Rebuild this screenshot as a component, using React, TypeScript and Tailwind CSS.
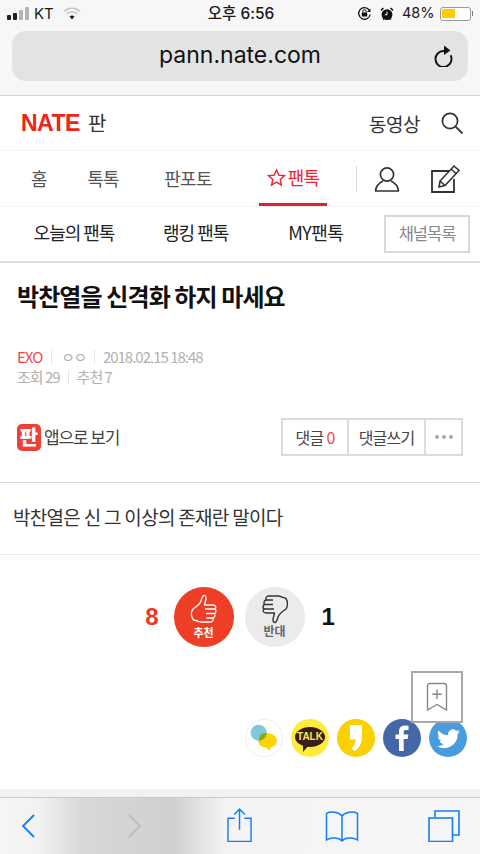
import React from "react";

const kr = "font-['Noto_Sans_CJK_KR','Noto_Sans',sans-serif]";

function StatusBar() {
  return (
    <div className="h-[27px] flex items-center justify-between pl-[7px] pr-[7px] font-['Inter','Noto_Sans_CJK_KR',sans-serif] text-[15px] text-[#1a1a1a]">
      <div className="flex items-center w-[136px]">
        <div className="flex items-end gap-[2px] h-[13px] mr-[5px]">
          <span className="w-[4px] h-[5px] rounded-[1px] bg-[#222]" />
          <span className="w-[4px] h-[7px] rounded-[1px] bg-[#222]" />
          <span className="w-[4px] h-[10px] rounded-[1px] bg-[#b4b4b4]" />
          <span className="w-[4px] h-[13px] rounded-[1px] bg-[#b4b4b4]" />
        </div>
        <span className="leading-none">KT</span>
        <svg width="18" height="13" viewBox="0 0 18 13" className="ml-[9px]">
          <path d="M1 4.5 C5.5 .2 12.5 .2 17 4.5" fill="none" stroke="#c4c4c4" strokeWidth="1.6" />
          <path d="M3.8 7 C7 4.2 11 4.2 14.2 7" fill="none" stroke="#c4c4c4" strokeWidth="1.6" />
          <path d="M6.5 9.4 C8 8.3 10 8.3 11.5 9.4 L9 12.5 Z" fill="#222" />
        </svg>
      </div>
      <span className="leading-none font-medium text-[15.5px] whitespace-nowrap">오후 6:56</span>
      <div className="flex items-center justify-end w-[134px]">
        <svg width="15" height="15" viewBox="0 0 15 15" className="mr-[8px]">
          <path d="M13.2 8.5 A5.8 5.8 0 1 1 12.2 4" fill="none" stroke="#111" strokeWidth="1.3" />
          <path d="M13.5 2.5 V6 H10 Z" fill="#111" />
          <rect x="4.8" y="6.6" width="5.4" height="4" rx=".6" fill="#111" />
          <path d="M5.8 6.6 V5.4 A1.7 1.7 0 0 1 9.2 5.4 V6.6" fill="none" stroke="#111" strokeWidth="1" />
        </svg>
        <svg width="14" height="14" viewBox="0 0 14 14" className="mr-[8px]">
          <circle cx="7" cy="7.6" r="5.4" fill="#111" />
          <path d="M1 3.4 L3.4 1 M13 3.4 L10.6 1 M3 12.6 L4 11.4 M11 12.6 L10 11.4" stroke="#111" strokeWidth="1.5" />
          <path d="M7 4.6 V7.8 H4.8" fill="none" stroke="#fff" strokeWidth="1" />
        </svg>
        <span className="leading-none text-[14.5px] mr-[5px]">48%</span>
        <div className="w-[31px] h-[14px] rounded-[3px] border border-[#9a9a9a] p-[1.5px] bg-white">
          <div className="w-[13px] h-full bg-[#ffcc00] rounded-[1px]" />
        </div>
        <span className="w-[1.5px] h-[5px] bg-[#777] ml-[1px]" />
      </div>
    </div>
  );
}

function UrlBar() {
  return (
    <div className="h-[68px] pt-[4px] px-[12px] bg-[#f7f7f7]">
      <div className="relative h-[50px] rounded-[14px] bg-[#e2e3e5] flex items-center justify-center">
        <span className="font-['Inter',sans-serif] text-[23px] leading-none text-[#111] pb-[1px]">pann.nate.com</span>
        <svg width="22" height="24" viewBox="0 0 22 24" className="absolute right-[13px] top-[12px]">
          <path d="M17.6 10.5 A8 8 0 1 1 11 6.2" fill="none" stroke="#111" strokeWidth="1.9" transform="translate(0 1.8)" />
          <path d="M11 2.6 L17.4 7.6 L11 12 Z" fill="#111" />
        </svg>
      </div>
    </div>
  );
}

function Header() {
  return (
    <div className="h-[56px] border-t border-[#d4d4d4] border-b-[#f3f3f3] border-b flex items-center justify-between pl-[21px] pr-[16px]">
      <div className="flex items-center">
        <span className="font-['Liberation_Sans',sans-serif] font-bold text-[#ee2512] text-[23px] leading-none tracking-[-0.5px]">NATE</span>
        <span className={`${kr} text-[20px] leading-none ml-[8px] text-[#333]`}>판</span>
      </div>
      <div className="flex items-center">
        <span className={`${kr} text-[19px] leading-none text-[#333] tracking-[-0.5px]`}>동영상</span>
        <svg width="24" height="24" viewBox="0 0 24 24" className="ml-[20px]">
          <circle cx="10" cy="10" r="7.6" fill="none" stroke="#333" strokeWidth="1.7" />
          <path d="M15.6 15.6 L22.5 22.5" stroke="#333" strokeWidth="1.8" />
        </svg>
      </div>
    </div>
  );
}

function MainNav() {
  return (
    <div className={`${kr} h-[56px] flex items-stretch border-b border-[#f3f3f3] text-[18px] tracking-[-0.7px] text-[#555]`}>
      <div className="w-[78px] flex items-center justify-center">홈</div>
      <div className="w-[50px] flex items-center justify-center">톡톡</div>
      <div className="w-[120px] flex items-center justify-center">판포토</div>
      <div className="ml-[11px] w-[68px] flex items-center justify-center gap-[2px] text-[#ee2230] border-b-[3px] border-[#e4202c] pt-[1px]">
        <svg width="19" height="19" viewBox="0 0 24 24" fill="none" stroke="#ee2230" strokeWidth="1.8">
          <path d="M12 2.5 L14.9 9 L22 9.7 L16.7 14.5 L18.2 21.5 L12 17.9 L5.8 21.5 L7.3 14.5 L2 9.7 L9.1 9 Z" />
        </svg>
        <span>팬톡</span>
      </div>
      <div className="flex-1 flex items-center pl-[29px]">
        <span className="w-px h-[26px] bg-[#d8d8d8]" />
        <svg width="26" height="26" viewBox="0 0 26 26" className="ml-[17px]">
          <circle cx="13" cy="8.5" r="6.6" fill="none" stroke="#333" strokeWidth="1.7" />
          <path d="M1.5 25 C2 19 6 16.5 9 15 M24.5 25 C24 19 20 16.5 17 15 M1 25 H25" fill="none" stroke="#333" strokeWidth="1.7" />
        </svg>
        <svg width="30" height="30" viewBox="0 0 30 30" className="ml-[30px]">
          <path d="M19 7 H2 V28 H24 V15" fill="none" stroke="#333" strokeWidth="1.8" />
          <path d="M9 23 L10 17 L24 2 L29 6.5 L15 21.5 Z M10 17 L15 21.5 M21 5 L26 9.5" fill="none" stroke="#333" strokeWidth="1.6" />
        </svg>
      </div>
    </div>
  );
}

function SubNav() {
  return (
    <div className={`${kr} h-[56px] flex items-center border-b-2 border-[#dedede] text-[18px] tracking-[-1px] text-[#222]`}>
      <div className="w-[148px] text-center pb-[3px]">오늘의 팬톡</div>
      <div className="ml-[15px] whitespace-nowrap pb-[3px]">랭킹 팬톡</div>
      <div className="ml-[60px] whitespace-nowrap pb-[3px] tracking-[-0.6px]">MY팬톡</div>
      <div className="ml-auto mr-[10px] w-[86px] h-[38px] mt-[-1px] border-2 border-[#d8d8d8] flex items-center justify-center text-[16.5px] text-[#888]">채널목록</div>
    </div>
  );
}

function Article() {
  return (
    <div className={kr}>
      <h1 className="pl-[17px] pt-[17px] text-[24px] font-bold leading-[32px] tracking-[-0.9px] text-[#111]">박찬열을 신격화 하지 마세요</h1>
      <div className="pl-[17px] pt-[35px] text-[15px] leading-[20px] tracking-[-1px] text-[#b0b0b0]">
        <div className="flex items-center">
          <span className="text-[#f0484e]">EXO</span>
          <span className="w-px h-[14px] bg-[#e6e6e6] mx-[9px]" />
          <span className="tracking-[-1.5px]">ㅇㅇ</span>
          <span className="w-px h-[14px] bg-[#e6e6e6] mx-[8px]" />
          <span>2018.02.15 18:48</span>
        </div>
        <div className="flex items-center">
          <span>조회 29</span>
          <span className="w-px h-[14px] bg-[#e6e6e6] mx-[8px]" />
          <span>추천 7</span>
        </div>
      </div>
      <div className="mt-[31px] pl-[17px] pr-[17px] flex items-center justify-between">
        <div className="flex items-center">
          <div className="w-[24px] h-[27px] rounded-[5px] bg-[#ee4035] flex items-center justify-center text-white font-black text-[20px] leading-none">
            판
          </div>
          <span className="ml-[3px] text-[17px] tracking-[-1.1px] text-[#444]">앱으로 보기</span>
        </div>
        <div className="flex h-[38px] border-2 border-[#dcdcdc] text-[16px] tracking-[-0.8px] text-[#444]">
          <div className="w-[64px] flex items-center justify-center gap-[3px]">
            댓글 <span className="text-[#f0484e]">0</span>
          </div>
          <div className="w-[79px] flex items-center justify-center border-x-2 border-[#dcdcdc]">댓글쓰기</div>
          <div className="w-[35px] flex items-center justify-center gap-[3px]">
            <span className="w-[4px] h-[4px] rounded-full bg-[#aaa]" />
            <span className="w-[4px] h-[4px] rounded-full bg-[#aaa]" />
            <span className="w-[4px] h-[4px] rounded-full bg-[#aaa]" />
          </div>
        </div>
      </div>
      <div className="mt-[26px] h-[73px] border-y border-t-[#d8d8d8] border-b-[#ececec] pl-[13px] pb-[2px] flex items-center text-[19px] tracking-[-0.7px] text-[#333]">
        박찬열은 신 그 이상의 존재란 말이다
      </div>
    </div>
  );
}

function Vote() {
  return (
    <div className={`${kr} pt-[32px] flex items-center justify-center`}>
      <span className="font-['Liberation_Sans',sans-serif] font-bold text-[24px] text-[#ee3a24] mr-[15px]">8</span>
      <div className="w-[60px] h-[60px] rounded-full bg-[#ee3f26] flex flex-col items-center pt-[7px]">
        <svg width="28" height="32" viewBox="0 0 28 32" fill="none" stroke="#fff" strokeWidth="1.3" strokeLinejoin="round">
          <path d="M13.5 1.5 C16 1 16.5 4 15.5 7 L14.5 11 L23 11 C26 11 26.5 14 25 15 C26.5 16.5 26 19 24.5 19.5 C25.5 21 25 23.5 23 24 C23.5 26 22.5 28 20.5 28 L11 28 C8 28 6 26 3.5 26 C1 23 0.5 18 3 15 C6 13 10 10 11 7 C11.5 5 12 2.5 13.5 1.5 Z" />
          <path d="M15 15 H25 M16 19.5 H24.5 M16 24 H23" />
        </svg>
        <span className="text-[11px] leading-[13px] font-bold text-white">추천</span>
      </div>
      <div className="w-[60px] h-[60px] rounded-full bg-[#ebebeb] ml-[11px] flex flex-col items-center pt-[7px]">
        <svg width="26" height="30" viewBox="0 0 26 30" fill="none" stroke="#333" strokeWidth="1.4" strokeLinejoin="round">
          <path d="M13.5 28.5 C11 29 10.5 26 11.5 23 L12.5 19 L4 19 C1 19 .5 16 2 15 C.5 13.5 1 11 2.5 10.5 C1.5 9 2 6.5 4 6 C3.5 4 4.5 2 6.5 2 L16 2 C19 2 21 4 23.5 4 C26 7 26 12 24 15 C21 17 17 20 16 23 C15.5 25 15 27.5 13.5 28.5 Z" />
          <path d="M12 15 H2 M11 10.5 H2.5 M11 6 H4" />
        </svg>
        <span className="text-[12px] leading-[13px] font-bold text-[#666]">반대</span>
      </div>
      <span className="font-['Liberation_Sans',sans-serif] font-bold text-[24px] text-[#111] ml-[17px]">1</span>
    </div>
  );
}

function Share() {
  return (
    <div className="relative mt-[72px] pl-[245px] flex gap-[8px] h-[38px]">
      <div className="w-[38px] h-[38px] rounded-full bg-white border border-[#efefef] flex items-center justify-center">
        <svg width="32" height="32" viewBox="0 0 30 30">
          <path d="M13 11 C20 9 27 12 27 17.5 C27 21 24.5 23 21.5 23.7 L19.5 27 L17.5 24 C12.5 23.5 9.5 21 9.5 17.5 C9.5 14.5 11 12 13 11 Z" fill="#ffd200" />
          <circle cx="10" cy="10" r="7.5" fill="#7ccbdc" />
          <path d="M10.3 17.5 A7.5 7.5 0 0 0 17.5 10.2 C13 10 10 13 10.3 17.5 Z" fill="#8ea916" />
        </svg>
      </div>
      <div className="w-[38px] h-[38px] rounded-full bg-[#ffeb3b] flex items-center justify-center relative">
        <div className="w-[30px] h-[20px] rounded-[50%] bg-[#3a1d1d] flex items-center justify-center mt-[-3px]">
          <span className="font-['Liberation_Sans',sans-serif] font-bold text-[10px] leading-none text-[#ffe94a]">TALK</span>
        </div>
        <svg width="8" height="7" viewBox="0 0 8 7" className="absolute left-[11px] top-[26px]">
          <path d="M1 0 L1 7 L7 0 Z" fill="#3a1d1d" />
        </svg>
      </div>
      <div className="w-[38px] h-[38px] rounded-full bg-[#fad000] flex items-center justify-center">
        <svg width="14" height="28" viewBox="0 0 14 28">
          <path d="M1 1 H13 V13 C13 19 10 24 6 27 L2.5 24.5 C5 22 6.5 19 6.8 15.5 H1 Z" fill="#fff" />
        </svg>
      </div>
      <div className="w-[38px] h-[38px] rounded-full bg-[#4467a8] flex items-center justify-center">
        <svg width="14" height="26" viewBox="0 0 14 26">
          <path d="M4 26 V14 H0.5 V9.5 H4 V6.5 C4 2.5 6.5 0.5 10 0.5 L13.5 0.8 V5 H11 C9.2 5 8.7 5.8 8.7 7.2 V9.5 H13.3 L12.7 14 H8.7 V26 Z" fill="#fff" />
        </svg>
      </div>
      <div className="w-[38px] h-[38px] rounded-full bg-[#479ddf] flex items-center justify-center">
        <svg width="25" height="25" viewBox="0 0 24 24">
          <path d="M23 5.5 a9 9 0 0 1-2.6.7 4.5 4.5 0 0 0 2-2.5 9 9 0 0 1-2.9 1.1 4.5 4.5 0 0 0-7.7 4.1 A12.8 12.8 0 0 1 2.5 4.2 a4.5 4.5 0 0 0 1.4 6 4.5 4.5 0 0 1-2-.6 4.5 4.5 0 0 0 3.6 4.5 4.5 4.5 0 0 1-2 .1 4.5 4.5 0 0 0 4.2 3.1 A9 9 0 0 1 1 19.1 a12.8 12.8 0 0 0 19.7-11.4 A9 9 0 0 0 23 5.5 Z" fill="#fff" />
        </svg>
      </div>
      <div className="absolute left-[411px] top-[-48px] w-[52px] h-[52px] border-2 border-[#a8a8a8] bg-white/95 flex items-center justify-center">
        <svg width="22" height="30" viewBox="0 0 22 30" fill="none" stroke="#888" strokeWidth="1.4">
          <path d="M1.5 28 V4 Q1.5 1.5 4 1.5 H18 Q20.5 1.5 20.5 4 V28 L11 22.5 Z" />
          <path d="M11 7.5 V17 M6.2 12.2 H15.8" />
        </svg>
      </div>
    </div>
  );
}

function Toolbar() {
  return (
    <div className="h-[57px] border-t border-[#c8c8c8] bg-[linear-gradient(90deg,#f6f6f6_0%,#f2f2f2_8%,#d8d8d8_17%,#d0d0d0_36%,#f4f4f4_47%,#f7f7f7_100%)] flex items-center justify-between pl-[21px] pr-[20px]">
      <svg width="14" height="24" viewBox="0 0 14 24" fill="none" stroke="#127efb" strokeWidth="1.8">
        <path d="M13 1 L2 12 L13 23" />
      </svg>
      <svg width="14" height="24" viewBox="0 0 14 24" fill="none" stroke="#bdbdbd" strokeWidth="1.8" className="ml-[84px]">
        <path d="M1 1 L12 12 L1 23" />
      </svg>
      <svg width="25" height="36" viewBox="0 0 26 36" fill="none" stroke="#127efb" strokeWidth="1.5" className="ml-[76px] mb-[3px]">
        <path d="M8 11 H1 V35 H25 V11 H18 M13 23 V1.5 M7.5 7 L13 1.5 L18.5 7" />
      </svg>
      <svg width="34" height="32" viewBox="0 0 34 32" fill="none" stroke="#127efb" strokeWidth="1.5" className="ml-[64px]">
        <path d="M17 6 C14 2 6 1 1.5 3.5 V30 C6 27 14 27.5 17 31 C20 27.5 28 27 32.5 30 V3.5 C28 1 20 2 17 6 Z M17 6 V31" />
      </svg>
      <svg width="32" height="32" viewBox="0 0 32 32" fill="none" stroke="#127efb" strokeWidth="1.6" className="ml-[60px]">
        <path d="M7 7 V1 H31 V25 H25" />
        <rect x="1" y="8" width="23.5" height="23.5" />
      </svg>
    </div>
  );
}

export default function App() {
  return (
    <div className="w-[480px] h-[854px] flex flex-col overflow-hidden bg-white">
      <div className="bg-[#f7f7f7]">
        <StatusBar />
        <UrlBar />
      </div>
      <Header />
      <MainNav />
      <SubNav />
      <div className="flex-1 overflow-hidden">
        <Article />
        <Vote />
        <Share />
      </div>
      <div className="h-[8px] bg-[#f2f2f2]" />
      <Toolbar />
    </div>
  );
}
